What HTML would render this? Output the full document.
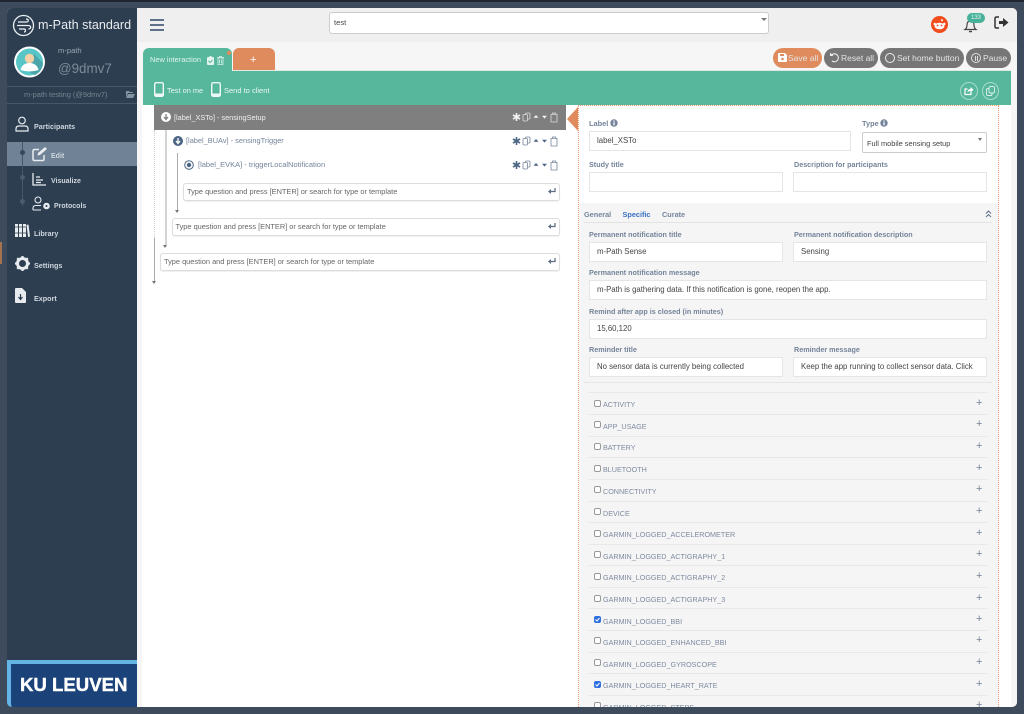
<!DOCTYPE html>
<html><head><meta charset="utf-8"><style>
html,body{margin:0;padding:0}
body{width:1024px;height:714px;overflow:hidden;background:#3d4b5c;font-family:"Liberation Sans",sans-serif;position:relative}
div,span,svg{position:absolute;box-sizing:border-box}
.t{white-space:nowrap;line-height:12px}
.l{font-size:7.2px;font-weight:bold;color:#75849a;margin-top:1px}
.i{background:#fff;border:1px solid #e3e5e8;font-size:7.8px;color:#444;padding-left:7px;white-space:nowrap;overflow:hidden}
.q{background:#fff;border:1px solid #ddd;border-radius:3px;box-shadow:0 1px 1px #eee;font-size:7.4px;color:#666;height:18px;line-height:16px;padding-left:3px;white-space:nowrap}
.row{left:589px;width:398px;height:22px;border-top:1px solid #e8e8e8}
.cb{left:594px;width:7px;height:7px;border:1px solid #999;border-radius:2px;background:#fff}
.cb.on{background:#2f6fe0;border-color:#2f6fe0}
.n{left:603px;font-size:7.2px;color:#7f8ba0;white-space:nowrap;line-height:10px;margin-top:1px}
.p{left:976px;font-size:11px;color:#75849a;line-height:10px}
.btn{top:48px;height:20px;border-radius:10px;background:#767676;color:#e4e4e4;font-size:8.5px;line-height:20px;white-space:nowrap}
.s{color:#cfd6de;font-size:7.2px;font-weight:bold;white-space:nowrap;line-height:10px;margin-top:1px}
</style></head><body>
<!-- window -->
<div style="left:7px;top:8px;width:1010px;height:699px;background:#fff;border-radius:5px;overflow:hidden">
 <div style="left:0;top:0;width:130px;height:699px;background:#2c3e50"></div>
 <div style="left:130px;top:0;width:880px;height:34px;background:#efefef"></div>
 <div style="left:130px;top:34px;width:880px;height:665px;background:#f6f6f6"></div>
 <div style="left:135px;top:97px;width:869px;height:602px;background:#fff"></div>
</div>
<!-- sidebar -->
<svg style="left:12px;top:14px" width="23" height="23" viewBox="0 0 23 23" fill="none" stroke="#eef1f4"><circle cx="11.5" cy="11.5" r="10" stroke-width="1.3"/><path d="M6 8h8c3 0 3-3 0-3M5 11.5h11c3.5 0 3.5 3.5 .5 3.5M7 15h5c2 0 2 3 0 3" stroke-width="1.2"/></svg>
<div class="t" style="left:38px;top:19px;font-size:12.6px;color:#e8ecef;line-height:13px">m-Path standard</div>
<svg style="left:13px;top:46px" width="34" height="32" viewBox="0 0 34 32"><circle cx="16.5" cy="16" r="15.5" fill="#fff"/><circle cx="16.5" cy="16" r="13.5" fill="#58c5c7"/><path d="M21 8l9 9a13.5 13.5 0 0 1-8 12l-6-3z" fill="#4aa5ab"/><circle cx="16.5" cy="12.5" r="4.7" fill="#f5cfa5"/><path d="M7.5 24c1-5 5-7 9-7s8 2 9 7q-9 3-18 0z" fill="#fff"/></svg>
<div class="t" style="left:58px;top:45px;font-size:7.6px;color:#9aa6b2">m-path</div>
<div class="t" style="left:58px;top:61px;font-size:13.4px;line-height:15px;color:#7d8b99">@9dmv7</div>
<div style="left:7px;top:86px;width:130px;height:18px;border-top:1px solid #46586a;border-bottom:1px solid #46586a"></div>
<div class="t" style="left:24px;top:89px;font-size:7.4px;color:#75848f">m-path testing (@9dmv7)</div>
<svg style="left:125px;top:90px" width="10" height="9" viewBox="0 0 10 9"><path d="M1 1h3l1 1h3v1H3L1 7zM3 4h7L8 8H1z" fill="#8493a1"/></svg>
<svg style="left:15px;top:116px" width="14" height="16" viewBox="0 0 14 16" fill="none" stroke="#e8ecef" stroke-width="1.2"><circle cx="7" cy="4.5" r="3.3"/><path d="M1 15v-2q0-3 3-3h6q3 0 3 3v2z"/></svg>
<div class="s" style="left:34px;top:121px">Participants</div>
<div style="left:7px;top:142px;width:130px;height:24px;background:#6f8296"></div>
<div style="left:22px;top:142px;width:1px;height:64px;background:#46586a"></div>
<div style="left:20px;top:150px;width:5px;height:5px;border-radius:50%;background:#36485a"></div>
<div style="left:20px;top:175px;width:5px;height:5px;border-radius:50%;background:#4a5c6e"></div>
<div style="left:20px;top:199px;width:5px;height:5px;border-radius:50%;background:#4a5c6e"></div>
<svg style="left:32px;top:146px" width="16" height="16" viewBox="0 0 16 16" fill="none" stroke="#e8ecef" stroke-width="1.5"><path d="M12 9v4q0 1.5-1.5 1.5h-8Q1 14.5 1 13V5q0-1.5 1.500-1.500H7"/><path d="M6 7l7-6 2 2-7 6-2.500.5z" fill="#e8ecef" stroke="none"/></svg>
<div class="s" style="left:51px;top:151px;font-size:7px">Edit</div>
<svg style="left:32px;top:172px" width="15" height="15" viewBox="0 0 15 15" fill="none" stroke="#e8ecef"><path d="M1 1v12h13" stroke-width="1.3"/><path d="M4 5h4M4 8h7M4 10.500h5" stroke-width="1.3"/></svg>
<div class="s" style="left:51px;top:176px;font-size:7px">Visualize</div>
<svg style="left:32px;top:196px" width="19" height="15" viewBox="0 0 19 15" fill="none" stroke="#e8ecef" stroke-width="1.1"><circle cx="6" cy="4" r="3"/><path d="M1 14v-2q0-2.5 3-2.5h5M1 14h8"/><circle cx="14.5" cy="10" r="2.8" fill="#e8ecef" stroke-width="1"/><circle cx="14.5" cy="10" r="1" fill="#2c3e50" stroke="none"/></svg>
<div class="s" style="left:54px;top:201px;font-size:7px">Protocols</div>
<svg style="left:15px;top:224px" width="15" height="14" viewBox="0 0 15 14" fill="#e8ecef"><rect x="0" y="0" width="3" height="13"/><rect x="4" y="0" width="3" height="13"/><rect x="8" y="0" width="3" height="13"/><path d="M11.5 1l2-.5 1.500 12-2 .5z"/><path d="M0 3h11M0 9h11" stroke="#2c3e50" stroke-width=".7"/></svg>
<div class="s" style="left:34px;top:228px">Library</div>
<svg style="left:15px;top:256px" width="15" height="15" viewBox="0 0 15 15"><circle cx="7.5" cy="7.5" r="5" fill="none" stroke="#e8ecef" stroke-width="3"/><path d="M7.5 0v15M0 7.5h15M2.2 2.2l10.600 10.600M12.800 2.200L2.200 12.800" stroke="#e8ecef" stroke-width="2.2" stroke-dasharray="2 11 2"/></svg>
<div class="s" style="left:34px;top:260px">Settings</div>
<svg style="left:15px;top:288px" width="12" height="15" viewBox="0 0 12 15"><path d="M1 0h6l4 4v10q0 1-1 1H1q-1 0-1-1V1q0-1 1-1z" fill="#e8ecef"/><path d="M5.5 6v5M3.5 9l2 2.500 2-2.500" stroke="#2c3e50" stroke-width="1.2" fill="none"/></svg>
<div class="s" style="left:34px;top:293px">Export</div>
<div style="left:7px;top:660px;width:130px;height:47px;background:#1b4279;border-top:4px solid #64b4e6;border-left:4px solid #64b4e6;border-bottom-left-radius:5px"></div>
<div class="t" style="left:20px;top:676px;font-size:18.6px;line-height:18px;font-weight:bold;color:#fff;-webkit-text-stroke:.4px #fff">KU LEUVEN</div>
<!-- top bar -->
<div style="left:150px;top:19px;width:14px;height:2px;background:#5d7189;box-shadow:0 5px 0 #5d7189,0 10px 0 #5d7189"></div>
<div style="left:329px;top:12px;width:440px;height:22px;background:#fff;border:1px solid #ccc;border-radius:3px"></div>
<div class="t" style="left:334px;top:17px;font-size:7.6px;color:#444">test</div>
<div style="left:761px;top:18px;border:3px solid transparent;border-top:3px solid #777"></div>
<svg style="left:931px;top:16px" width="17" height="17" viewBox="0 0 17 17"><circle cx="8.5" cy="8.5" r="8.5" fill="#f04c1c"/><ellipse cx="8.5" cy="10" rx="5" ry="3.3" fill="#fff"/><circle cx="6.5" cy="9.5" r=".9" fill="#f04c1c"/><circle cx="10.5" cy="9.5" r=".9" fill="#f04c1c"/><circle cx="3.7" cy="8" r="1.2" fill="#fff"/><circle cx="13.3" cy="8" r="1.2" fill="#fff"/><circle cx="11" cy="4.3" r="1" fill="#fff"/></svg>
<svg style="left:963px;top:18px" width="15" height="15" viewBox="0 0 15 15" fill="none" stroke="#444" stroke-width="1.2"><path d="M2 11.5q2-1.500 2-4.500 0-4 3.500-4T11 7q0 3 2 4.500z"/><path d="M6 13.5h3" stroke-width="1.5"/></svg>
<div style="left:967px;top:13px;width:18px;height:10px;border-radius:5px;background:#47b299;color:#e8f5f1;font-size:6px;line-height:10px;text-align:center">133</div>
<svg style="left:994px;top:16px" width="15" height="13" viewBox="0 0 15 13"><path d="M5 1H2.500Q1 1 1 2.500v8Q1 12 2.500 12H5" fill="none" stroke="#333" stroke-width="1.5"/><path d="M5 5h4V2l5.500 4.500L9 11V8H5z" fill="#333"/></svg>
<!-- buttons -->
<div class="btn" style="left:773px;width:49px;background:#e08b5d;padding-left:15px">Save all</div>
<svg style="left:778px;top:53px" width="9" height="9" viewBox="0 0 9 9"><path d="M0 1q0-1 1-1h6l2 2v6q0 1-1 1H1q-1 0-1-1z" fill="#fff"/><rect x="2" y="1" width="4" height="2" fill="#e08b5d"/><circle cx="4.5" cy="6" r="1.3" fill="#e08b5d"/></svg>
<div class="btn" style="left:824px;width:54px;padding-left:17px">Reset all</div>
<svg style="left:829px;top:52px" width="11" height="11" viewBox="0 0 11 11" fill="none" stroke="#eee" stroke-width="1.1"><path d="M2.500 3A4 4 0 1 1 3 9"/><path d="M1 .5v3.500h3.500" fill="#eee" stroke="none"/></svg>
<div class="btn" style="left:880px;width:84px;padding-left:17px">Set home button</div>
<div style="left:885px;top:53px;width:10px;height:10px;border:1px solid #eee;border-radius:50%"></div>
<div class="btn" style="left:966px;width:45px;padding-left:17px">Pause</div>
<div style="left:971px;top:53px;width:10px;height:10px;border:1px solid #ddd;border-radius:50%"></div>
<div style="left:974.5px;top:55.5px;width:3px;height:5px;border-left:1px solid #ddd;border-right:1px solid #ddd"></div>
<!-- tabs and green bar -->
<div style="left:143px;top:48px;width:89px;height:30px;background:#56b79c;border-radius:6px 6px 0 0"></div>
<div style="left:233px;top:48px;width:42px;height:23px;background:#e08b5d;border-radius:6px 6px 0 0"></div>
<div style="left:227px;top:51px;width:4px;height:4px;border-radius:50%;background:#e08b5d"></div>
<div class="t" style="left:150px;top:54px;font-size:7.4px;color:#e4f3ee">New interaction</div>
<svg style="left:207px;top:56px" width="7" height="9" viewBox="0 0 7 9"><path d="M1 1h1.500V0h2v1H6q1 0 1 1v6q0 1-1 1H1Q0 9 0 8V2q0-1 1-1z" fill="#e4f3ee"/><path d="M1.500 5l1.500 1.500 2.500-2.500" stroke="#56b79c" fill="none"/></svg>
<svg style="left:217px;top:56px" width="7" height="9" viewBox="0 0 7 9" fill="none" stroke="#d9eee8" stroke-width=".8"><path d="M1 2h5v6.500H1zM0 1.500h7M2.500 1V.3h2V1M2.500 3.500v4M4.500 3.500v4"/></svg>
<div class="t" style="left:250px;top:54px;font-size:11px;color:#fff">+</div>
<div style="left:143px;top:71px;width:868px;height:34px;background:#56b79c"></div>
<div style="left:233px;top:70px;width:778px;height:1px;background:#e0e8e4"></div>
<svg style="left:154px;top:82px" width="10" height="15" viewBox="0 0 10 15"><rect x=".7" y=".7" width="8.6" height="13.6" rx="1.5" fill="none" stroke="#f0f8f5" stroke-width="1.4"/><rect x="1" y="11.5" width="8" height="2.8" fill="#f0f8f5"/></svg>
<div class="t" style="left:167px;top:85px;font-size:7.4px;color:#eaf6f2">Test on me</div>
<svg style="left:211px;top:82px" width="10" height="15" viewBox="0 0 10 15"><rect x=".7" y=".7" width="8.6" height="13.6" rx="1.5" fill="none" stroke="#f0f8f5" stroke-width="1.4"/><rect x="1" y="11.5" width="8" height="2.8" fill="#f0f8f5"/></svg>
<div class="t" style="left:224px;top:85px;font-size:7.5px;color:#eaf6f2">Send to client</div>
<div style="left:960px;top:82px;width:18px;height:18px;border:1px solid #a6dccb;border-radius:50%"></div>
<svg style="left:964px;top:86px" width="10" height="10" viewBox="0 0 10 10"><path d="M7 5.500V8.500H1V3h2.500" fill="none" stroke="#fff" stroke-width="1.2"/><path d="M3.500 6.500q0-3.500 3-3.500V1l3 2.800L6.500 6.500V5q-2 0-3 1.500z" fill="#fff"/></svg>
<div style="left:982px;top:82px;width:17px;height:18px;border:1px solid #a6dccb;border-radius:50%"></div>
<svg style="left:986px;top:86px" width="9" height="10" viewBox="0 0 9 10" fill="none" stroke="#dff2ec" stroke-width=".9"><rect x="3" y=".5" width="5.5" height="6.5" rx="1.5"/><path d="M3 2.500H2Q.5 2.500.5 4v4Q.5 9.500 2 9.500h3Q6 9.500 6 8V7"/></svg>
<!-- tree -->
<div style="left:154px;top:105px;width:412px;height:25px;background:#7f7f7f"></div>
<svg style="left:161px;top:112px" width="10" height="10" viewBox="0 0 10 10"><circle cx="5" cy="5" r="5" fill="#fff"/><path d="M5 2v5M3 5l2 2.500L7 5" stroke="#7f7f7f" stroke-width="1.3" fill="none"/></svg>
<div class="t" style="left:174px;top:112px;font-size:7.3px;color:#f0f0f0">[label_XSTo] - sensingSetup</div>
<svg style="left:173px;top:136px" width="10" height="10" viewBox="0 0 10 10"><circle cx="5" cy="5" r="5" fill="#4b6584"/><path d="M5 2v5M3 5l2 2.500L7 5" stroke="#fff" stroke-width="1.3" fill="none"/></svg>
<div class="t" style="left:186px;top:135px;font-size:7.4px;color:#75849a">[label_BUAv] - sensingTrigger</div>
<svg style="left:184px;top:160px" width="10" height="10" viewBox="0 0 10 10"><circle cx="5" cy="5" r="4.300" fill="none" stroke="#4b6584"/><circle cx="5" cy="5" r="2.2" fill="#4b6584"/></svg>
<div class="t" style="left:198px;top:159px;font-size:7.5px;color:#75849a">[label_EVKA] - triggerLocalNotification</div>
<!-- action icons -->
<svg style="left:511px;top:112px" width="50" height="60" viewBox="0 0 50 60">
 <g><path d="M5.500 1v8M2 3l7 4M9 3L2 7" stroke="#f2f2f2" stroke-width="1.6"/><rect x="14.500" y="1" width="4.500" height="6" rx="1" fill="none" stroke="#ddd" stroke-width=".8"/><rect x="12" y="2.500" width="4.500" height="6.500" rx="1" fill="#7f7f7f" stroke="#ddd" stroke-width=".8"/><path d="M22.500 5.800l2.500-2.800 2.500 2.800z" fill="#f2f2f2"/><path d="M31 3.800l2.500 2.800L36 3.800z" fill="#f2f2f2"/><path d="M40 2.500h6v7.500h-6zM39.500 2.500h7M41.500 2V1h3v1" fill="none" stroke="#ddd" stroke-width=".8"/></g>
 <g transform="translate(0,24)"><path d="M5.500 1v8M2 3l7 4M9 3L2 7" stroke="#4b6584" stroke-width="1.6"/><rect x="14.500" y="1" width="4.500" height="6" rx="1" fill="none" stroke="#75849a" stroke-width=".8"/><rect x="12" y="2.500" width="4.500" height="6.500" rx="1" fill="#fff" stroke="#75849a" stroke-width=".8"/><path d="M22.500 5.800l2.500-2.800 2.500 2.800z" fill="#4b6584"/><path d="M31 3.800l2.500 2.800L36 3.800z" fill="#4b6584"/><path d="M40 2.500h6v7.500h-6zM39.500 2.500h7M41.500 2V1h3v1" fill="none" stroke="#75849a" stroke-width=".8"/></g>
 <g transform="translate(0,48)"><path d="M5.500 1v8M2 3l7 4M9 3L2 7" stroke="#4b6584" stroke-width="1.6"/><rect x="14.500" y="1" width="4.500" height="6" rx="1" fill="none" stroke="#75849a" stroke-width=".8"/><rect x="12" y="2.500" width="4.500" height="6.500" rx="1" fill="#fff" stroke="#75849a" stroke-width=".8"/><path d="M22.500 5.800l2.500-2.800 2.500 2.800z" fill="#4b6584"/><path d="M31 3.800l2.500 2.800L36 3.800z" fill="#4b6584"/><path d="M40 2.500h6v7.500h-6zM39.500 2.500h7M41.500 2V1h3v1" fill="none" stroke="#75849a" stroke-width=".8"/></g>
</svg>
<!-- tree lines -->
<div style="left:154px;top:130px;width:1px;height:108px;border-left:1px dotted #ccc"></div>
<div style="left:165px;top:130px;width:2px;height:115px;background:#d4d4d4"></div>
<div style="left:177px;top:153px;width:1px;height:57px;background:#aaa"></div>
<div style="left:154px;top:238px;width:1px;height:43px;background:#aaa"></div>
<div style="left:175px;top:210px;border:2.5px solid transparent;border-top:3px solid #777"></div>
<div style="left:163px;top:245px;border:2.5px solid transparent;border-top:3px solid #777"></div>
<div style="left:152px;top:281px;border:2.5px solid transparent;border-top:3px solid #777"></div>
<div class="q" style="left:183px;top:183px;width:377px">Type question and press [ENTER] or search for type or template</div>
<div class="q" style="left:171.5px;top:218px;width:388.5px">Type question and press [ENTER] or search for type or template</div>
<div class="q" style="left:160px;top:253px;width:400px">Type question and press [ENTER] or search for type or template</div>
<svg style="left:548px;top:188px" width="8" height="7" viewBox="0 0 8 7"><path d="M7 0v3.500H2" fill="none" stroke="#5d6f85" stroke-width="1.3"/><path d="M3 1L0 3.500 3 6z" fill="#5d6f85"/></svg>
<svg style="left:548px;top:223px" width="8" height="7" viewBox="0 0 8 7"><path d="M7 0v3.500H2" fill="none" stroke="#5d6f85" stroke-width="1.3"/><path d="M3 1L0 3.500 3 6z" fill="#5d6f85"/></svg>
<svg style="left:548px;top:258px" width="8" height="7" viewBox="0 0 8 7"><path d="M7 0v3.500H2" fill="none" stroke="#5d6f85" stroke-width="1.3"/><path d="M3 1L0 3.500 3 6z" fill="#5d6f85"/></svg>
<!-- right panel -->
<div style="left:578px;top:105px;width:421px;height:602px;background:#fff;border:1px dotted #e89a6c;border-bottom:0"></div>
<div style="left:579px;top:203px;width:419px;height:504px;background:#f5f5f5"></div>
<svg style="left:567px;top:107px" width="11" height="24" viewBox="0 0 11 24"><path d="M11 0v24L0 12z" fill="#e08b5d"/></svg>
<div class="t l" style="left:589px;top:117px;font-size:7.4px">Label</div>
<svg style="left:610px;top:119px" width="8" height="8"><circle cx="4" cy="4" r="3.7" fill="#75849a"/><rect x="3.4" y="3.3" width="1.3" height="3" fill="#fff"/><rect x="3.4" y="1.5" width="1.3" height="1.2" fill="#fff"/></svg>
<div class="t l" style="left:862px;top:117px;font-size:7.4px">Type</div>
<svg style="left:880px;top:119px" width="8" height="8"><circle cx="4" cy="4" r="3.7" fill="#75849a"/><rect x="3.4" y="3.3" width="1.3" height="3" fill="#fff"/><rect x="3.4" y="1.5" width="1.3" height="1.2" fill="#fff"/></svg>
<div class="i" style="left:589px;top:131px;width:262px;height:20px;line-height:18px">label_XSTo</div>
<div class="i" style="left:862px;top:132px;width:125px;height:21px;line-height:21px;padding-left:4px;border-color:#ccc;border-radius:2px;font-size:7.4px">Full mobile sensing setup</div>
<div style="left:978px;top:138px;border:2.5px solid transparent;border-top:3px solid #777"></div>
<div class="t l" style="left:589px;top:158px">Study title</div>
<div class="t l" style="left:794px;top:158px">Description for participants</div>
<div class="i" style="left:589px;top:172px;width:194px;height:20px"></div>
<div class="i" style="left:793px;top:172px;width:194px;height:20px"></div>
<div class="t" style="left:584px;top:209px;font-size:7.3px;font-weight:bold;color:#75849a">General</div>
<div class="t" style="left:622.5px;top:209px;font-size:7.3px;font-weight:bold;color:#3a6fc4">Specific</div>
<div class="t" style="left:662px;top:209px;font-size:7.3px;font-weight:bold;color:#75849a">Curate</div>
<svg style="left:985px;top:210px" width="7" height="8" viewBox="0 0 7 8" fill="none" stroke="#5d7189" stroke-width="1"><path d="M1 3.500L3.500 1 6 3.500M1 7L3.500 4.500 6 7"/></svg>
<div style="left:584px;top:222px;width:408px;height:1px;background:#e3e3e3"></div>
<div class="t l" style="left:589px;top:228px">Permanent notification title</div>
<div class="t l" style="left:794px;top:228px">Permanent notification description</div>
<div class="i" style="left:589px;top:242px;width:194px;height:20px;line-height:18px">m-Path Sense</div>
<div class="i" style="left:793px;top:242px;width:194px;height:20px;line-height:18px">Sensing</div>
<div class="t l" style="left:589px;top:266px">Permanent notification message</div>
<div class="i" style="left:589px;top:280px;width:398px;height:20px;line-height:18px">m-Path is gathering data. If this notification is gone, reopen the app.</div>
<div class="t l" style="left:589px;top:305px">Remind after app is closed (in minutes)</div>
<div class="i" style="left:589px;top:319px;width:398px;height:20px;line-height:18px">15,60,120</div>
<div class="t l" style="left:589px;top:343px">Reminder title</div>
<div class="t l" style="left:794px;top:343px">Reminder message</div>
<div class="i" style="left:589px;top:357px;width:194px;height:20px;line-height:18px">No sensor data is currently being collected</div>
<div class="i" style="left:793px;top:357px;width:194px;height:20px;line-height:18px">Keep the app running to collect sensor data. Click</div>
<div style="left:584px;top:382px;width:408px;height:1px;background:#e6e6e6"></div>
<!-- list -->
<div class="row" style="top:392px"></div><div class="cb" style="top:400px"></div><div class="n" style="top:399px">ACTIVITY</div><div class="p" style="top:398px">+</div>
<div class="row" style="top:414px"></div><div class="cb" style="top:421px"></div><div class="n" style="top:421px">APP_USAGE</div><div class="p" style="top:419px">+</div>
<div class="row" style="top:436px"></div><div class="cb" style="top:443px"></div><div class="n" style="top:442px">BATTERY</div><div class="p" style="top:441px">+</div>
<div class="row" style="top:457px"></div><div class="cb" style="top:465px"></div><div class="n" style="top:464px">BLUETOOTH</div><div class="p" style="top:463px">+</div>
<div class="row" style="top:479px"></div><div class="cb" style="top:486px"></div><div class="n" style="top:486px">CONNECTIVITY</div><div class="p" style="top:484px">+</div>
<div class="row" style="top:501px"></div><div class="cb" style="top:508px"></div><div class="n" style="top:508px">DEVICE</div><div class="p" style="top:506px">+</div>
<div class="row" style="top:522px"></div><div class="cb" style="top:530px"></div><div class="n" style="top:529px">GARMIN_LOGGED_ACCELEROMETER</div><div class="p" style="top:528px">+</div>
<div class="row" style="top:544px"></div><div class="cb" style="top:551px"></div><div class="n" style="top:551px">GARMIN_LOGGED_ACTIGRAPHY_1</div><div class="p" style="top:549px">+</div>
<div class="row" style="top:565px"></div><div class="cb" style="top:573px"></div><div class="n" style="top:572px">GARMIN_LOGGED_ACTIGRAPHY_2</div><div class="p" style="top:571px">+</div>
<div class="row" style="top:587px"></div><div class="cb" style="top:595px"></div><div class="n" style="top:594px">GARMIN_LOGGED_ACTIGRAPHY_3</div><div class="p" style="top:593px">+</div>
<div class="row" style="top:608px"></div><div class="cb on" style="top:616px"></div><div class="n" style="top:616px">GARMIN_LOGGED_BBI</div><div class="p" style="top:614px">+</div>
<div class="row" style="top:630px"></div><div class="cb" style="top:637px"></div><div class="n" style="top:637px">GARMIN_LOGGED_ENHANCED_BBI</div><div class="p" style="top:635px">+</div>
<div class="row" style="top:652px"></div><div class="cb" style="top:659px"></div><div class="n" style="top:659px">GARMIN_LOGGED_GYROSCOPE</div><div class="p" style="top:657px">+</div>
<div class="row" style="top:673px"></div><div class="cb on" style="top:681px"></div><div class="n" style="top:680px">GARMIN_LOGGED_HEART_RATE</div><div class="p" style="top:679px">+</div>
<div class="row" style="top:695px;height:12px;overflow:hidden"></div>
<svg style="left:595px;top:617px" width="5" height="5" viewBox="0 0 5 5"><path d="M.5 2.500L2 4 4.500 1" stroke="#fff" fill="none"/></svg>
<svg style="left:595px;top:682px" width="5" height="5" viewBox="0 0 5 5"><path d="M.5 2.500L2 4 4.500 1" stroke="#fff" fill="none"/></svg>
<div class="cb" style="top:702px"></div><div class="n" style="top:702px">GARMIN_LOGGED_STEPS</div><div class="p" style="top:700px">+</div>
<!-- edge covers -->
<div style="left:0;top:707px;width:1024px;height:7px;background:#3d4b5c"></div>
<div style="left:0;top:242px;width:2px;height:22px;background:#a5734f"></div>
<div style="left:0;top:0;width:1024px;height:2px;background:#20262f"></div>
</body></html>
